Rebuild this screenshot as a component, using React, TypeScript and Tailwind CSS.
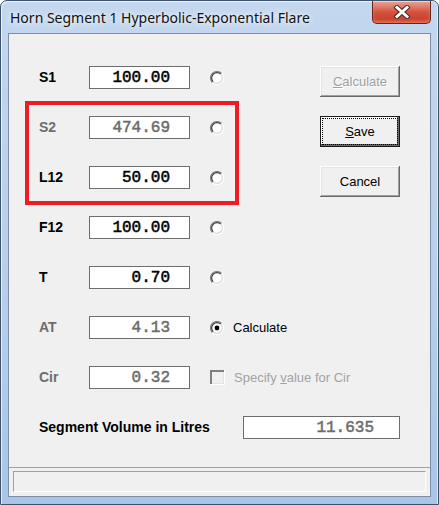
import React from "react";

type Row = {
  label: string;
  value: string;
  dim?: boolean;
  control: "radio" | "radio-on" | "check";
};

const rows: Row[] = [
  { label: "S1", value: "100.00", control: "radio" },
  { label: "S2", value: "474.69", dim: true, control: "radio" },
  { label: "L12", value: "50.00", control: "radio" },
  { label: "F12", value: "100.00", control: "radio" },
  { label: "T", value: "0.70", control: "radio" },
  { label: "AT", value: "4.13", dim: true, control: "radio-on" },
  { label: "Cir", value: "0.32", dim: true, control: "check" },
];

function Radio({ checked }: { checked?: boolean }) {
  return (
    <svg width="14" height="14" viewBox="0 0 14 14" className="shrink-0">
      <circle cx="7" cy="7" r="6" fill="#ffffff" />
      <path d="M11.6 2.4 A6.5 6.5 0 0 0 2.4 11.6" fill="none" stroke="#808080" strokeWidth="1.2" />
      <path d="M10.8 3.2 A5.3 5.3 0 0 0 3.2 10.8" fill="none" stroke="#3c3c3c" strokeWidth="1.2" />
      <path d="M11.6 2.4 A6.5 6.5 0 0 1 2.4 11.6" fill="none" stroke="#ffffff" strokeWidth="1.2" />
      <path d="M10.8 3.2 A5.3 5.3 0 0 1 3.2 10.8" fill="none" stroke="#d8d8d8" strokeWidth="1.2" />
      {checked && <circle cx="7" cy="7" r="2.4" fill="#000000" />}
    </svg>
  );
}

function CheckBox() {
  return (
    <div className="h-[15px] w-[15px] shrink-0 border-b border-r border-white">
      <div className="h-full w-full border-l-2 border-t-2 border-[#808080] bg-[#f0f0f0] shadow-[inset_-1px_-1px_0_#e3e3e3]" />
    </div>
  );
}

function Field({ value, dim, width, pr }: { value: string; dim?: boolean; width: string; pr: string }) {
  return (
    <div
      className={`flex h-[23px] shrink-0 items-center justify-end border border-[#6d6d6d] bg-white font-['Liberation_Mono',monospace] text-[16px] font-normal leading-none [-webkit-text-stroke:0.5px_currentColor] ${width} ${pr} ${
        dim ? "text-[#6d6d6d]" : "text-black"
      }`}
    >
      {value}
    </div>
  );
}

function Button({ children, variant }: { children: React.ReactNode; variant?: "default" | "disabled" }) {
  if (variant === "default") {
    return (
      <div className="h-[31px] w-[80px] border border-[#1a1a1a] bg-[#f0f0f0] p-[1px] shadow-[inset_-2px_-2px_0_#696969,inset_2px_2px_0_#ffffff]">
        <div className="flex h-full w-full items-center justify-center border border-dotted border-black text-[13px] text-black">
          {children}
        </div>
      </div>
    );
  }
  return (
    <div
      className={`flex h-[31px] w-[80px] items-center justify-center bg-[#f0f0f0] text-[13px] shadow-[inset_-1px_-1px_0_#696969,inset_1px_1px_0_#ffffff,inset_-2px_-2px_0_#a0a0a0,inset_2px_2px_0_#e3e3e3] ${
        variant === "disabled" ? "text-[#a0a0a0] [text-shadow:1px_1px_0_#ffffff]" : "text-black"
      }`}
    >
      {children}
    </div>
  );
}

export default function App() {
  return (
    <div className="h-[505px] w-[439px] bg-white font-['Liberation_Sans',Arial,sans-serif]">
      <div className="relative flex h-full flex-col rounded-t-[7px] border border-[#3f526b] bg-gradient-to-b from-[#c3d7ee] via-[#b9d0ea] to-[#a9c5e6] shadow-[inset_1px_1px_0_rgba(255,255,255,0.7),inset_-1px_0_0_rgba(255,255,255,0.6)]">
        <div className="flex h-[32px] shrink-0 items-start justify-between">
          <div className="pl-[9px] pt-[7px] font-['Noto_Sans',sans-serif] text-[14px] leading-[20px] text-[#111] [text-shadow:0_0_8px_#ffffff,0_0_4px_#eef4fb]">
            Horn Segment 1 Hyperbolic-Exponential Flare
          </div>
          <div className="mr-[7px] flex h-[23px] w-[59px] items-center justify-center rounded-b-[5px] border border-t-0 border-[#6b2418] bg-gradient-to-b from-[#e6a596] via-[#d4533e] to-[#c23b27] shadow-[inset_0_1px_0_rgba(255,255,255,0.5),inset_0_-2px_3px_rgba(255,170,140,0.5)]">
            <svg width="18" height="14" viewBox="0 0 18 14">
              <path d="M4 2.5 L14 11.5 M14 2.5 L4 11.5" stroke="#4a2a26" strokeWidth="5" strokeLinecap="square" />
              <path d="M4 2.5 L14 11.5 M14 2.5 L4 11.5" stroke="#ffffff" strokeWidth="3" strokeLinecap="square" />
            </svg>
          </div>
        </div>

        <div className="mx-[7px] mb-[7px] flex flex-1 flex-col border border-[#7d8fa6] bg-[#f0f0f0]">
          <div className="relative pl-[30px] pt-[32px]">
            <div className="grid grid-cols-[281px_80px]">
              <div className="flex flex-col gap-[27px]">
                {rows.map((r) => (
                  <div key={r.label} className="flex h-[23px] items-center whitespace-nowrap">
                    <div className={`w-[50px] shrink-0 text-[14px] font-bold ${r.dim ? "text-[#6d6d6d]" : "text-black"}`}>
                      {r.label}
                    </div>
                    <Field value={r.value} dim={r.dim} width="w-[101px]" pr="pr-[19px]" />
                    <div className="ml-[20px] flex shrink-0 items-center">
                      {r.control === "check" ? <CheckBox /> : <Radio checked={r.control === "radio-on"} />}
                      {r.control === "radio-on" && (
                        <span className="ml-[9px] text-[13px] text-black">Calculate</span>
                      )}
                      {r.control === "check" && (
                        <span className="ml-[9px] text-[13px] text-[#a3a3a3]">
                          Specify <span className="underline">v</span>alue for Cir
                        </span>
                      )}
                    </div>
                  </div>
                ))}
              </div>
              <div className="flex flex-col gap-[19px] self-start">
                <Button variant="disabled">
                  <span>
                    <span className="underline">C</span>alculate
                  </span>
                </Button>
                <Button variant="default">
                  <span>
                    <span className="underline">S</span>ave
                  </span>
                </Button>
                <Button>Cancel</Button>
              </div>
              <div className="col-span-2 mt-[27px] flex h-[23px] items-center">
                <div className="w-[204px] shrink-0 text-[14px] font-bold text-black">Segment Volume in Litres</div>
                <Field value="11.635" dim width="w-[157px]" pr="pr-[25px]" />
              </div>
            </div>

            <div className="absolute left-[16px] top-[67px] h-[104px] w-[214px] border-4 border-[#ed1c24]" />
          </div>

          <div className="mt-auto h-[29px] border-t border-[#a0a0a0] px-[4px] pt-[3px]">
            <div className="h-[21px] border border-[#a0a0a0] border-b-white border-r-white" />
          </div>
        </div>
      </div>
    </div>
  );
}
